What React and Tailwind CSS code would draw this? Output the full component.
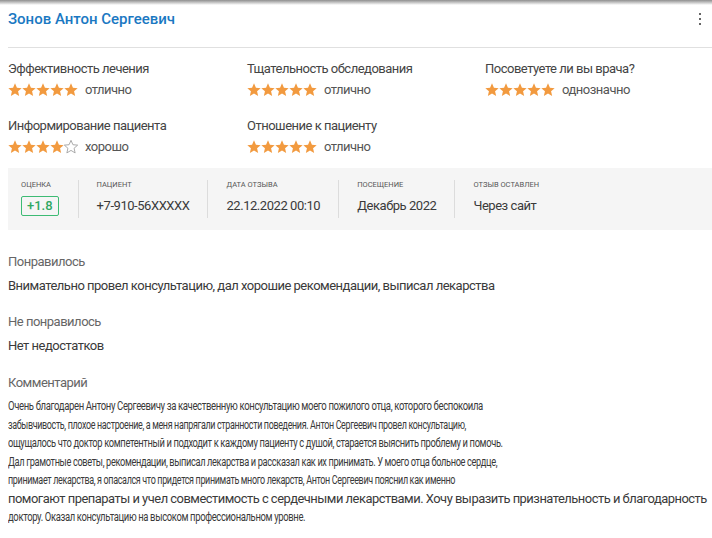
import React from 'react'

/* -------------------- STARS -------------------- */

function Star({filled}){

  return (
    <svg width="14" height="14" viewBox="1.5 2 21 21" className="shrink-0">
      <path
        d="M12 2.5l2.9 6.6 7.1.6-5.4 4.7 1.6 7-6.2-3.8-6.2 3.8 1.6-7L2 9.7l7.1-.6z"
        fill={filled ? '#f29a3f' : 'none'}
        stroke={filled ? '#f29a3f' : '#9e9e9e'}
        strokeWidth={filled ? 0 : 1.3}
        strokeLinejoin="round"
      />
    </svg>
  )

}

function Rating({label, value, text}){

  return (
    <div className="flex flex-col gap-[5px]">
      <span className="text-[13px] tracking-[-0.5px] text-[#444] leading-[16px]">{label}</span>
      <div className="flex items-center gap-[7px]">
        <div className="flex">
          {[1,2,3,4,5].map(i => <Star key={i} filled={i <= value}/>)}
        </div>
        <span className="text-[13px] tracking-[-0.5px] text-[#555] leading-[16px]">{text}</span>
      </div>
    </div>
  )

}

/* -------------------- INFO STRIP -------------------- */

function InfoCell({title, children, first}){

  return (
    <div className={first ? 'flex flex-col gap-[4px] pr-[19px]' : 'flex flex-col gap-[4px] px-[18px] border-l border-[#dcdcdc]'}>
      <span className="text-[7.5px] uppercase text-[#555] leading-[10px] h-[10px]">{title}</span>
      <div className="h-[24px] flex items-center text-[13px] tracking-[-0.45px] text-[#3a3a3a] whitespace-nowrap">{children}</div>
    </div>
  )

}

const ratings = [
  {label: 'Эффективность лечения', value: 5, text: 'отлично'},
  {label: 'Тщательность обследования', value: 5, text: 'отлично'},
  {label: 'Посоветуете ли вы врача?', value: 5, text: 'однозначно'},
  {label: 'Информирование пациента', value: 4, text: 'хорошо'},
  {label: 'Отношение к пациенту', value: 5, text: 'отлично'},
]

// comment lines, as they break in the card
const commentLines = [
  {fit: 'scale-x-[0.733]', text: 'Очень благодарен Антону Сергеевичу за качественную консультацию моего пожилого отца, которого беспокоила'},
  {fit: 'scale-x-[0.688]', text: 'забывчивость, плохое настроение, а меня напрягали странности поведения. Антон Сергеевич провел консультацию,'},
  {fit: 'scale-x-[0.72]', text: 'ощущалось что доктор компетентный и подходит к каждому пациенту с душой, старается выяснить проблему и помочь.'},
  {fit: 'scale-x-[0.711]', text: 'Дал грамотные советы, рекомендации, выписал лекарства и рассказал как их принимать. У моего отца больное сердце,'},
  {fit: 'scale-x-[0.691]', text: 'принимает лекарства, я опасался что придется принимать много лекарств, Антон Сергеевич пояснил как именно'},
  {fit: 'scale-x-[0.994]', text: 'помогают препараты и учел совместимость с сердечными лекарствами. Хочу выразить признательность и благодарность'},
  {fit: 'scale-x-[0.728]', text: 'доктору. Оказал консультацию на высоком профессиональном уровне.'},
]

/* ========================================================= */

export default function App(){

  return (

    <main className="w-[712px] h-[538px] overflow-hidden bg-white font-['Roboto',sans-serif]">

      <div className="h-[5px] bg-gradient-to-b from-[#8f8f8f] to-white"></div>

      {/* Header */}

      <div className="flex items-start justify-between pl-[8px] pr-[6px] pt-[4px] h-[42px]">
        <h1 className="text-[15px] font-medium text-[#1a78c2] leading-[20px]">
          Зонов Антон Сергеевич
        </h1>
        <div className="flex flex-col gap-[3px] mt-[4px] mr-[5px]">
          <span className="w-[2px] h-[2px] bg-[#666]"></span>
          <span className="w-[2px] h-[2px] bg-[#666]"></span>
          <span className="w-[2px] h-[2px] bg-[#666]"></span>
        </div>
      </div>

      <div className="ml-[8px] border-t border-[#e0e0e0]"></div>

      {/* Ratings */}

      <div className="grid grid-cols-[239px_238px_1fr] gap-y-[20px] pl-[8px] pt-[13px]">
        {ratings.map(r => (
          <Rating key={r.label} {...r}/>
        ))}
      </div>

      {/* Info strip */}

      <div className="ml-[8px] mt-[13px] h-[62px] bg-[#f5f5f5] flex items-center pl-[13px]">
        <InfoCell title="Оценка" first>
          <span className="px-[5px] h-[20px] flex items-center border border-[#3dbb74] rounded-[2px] text-[#2fa862] font-medium text-[13px] tracking-normal">+1.8</span>
        </InfoCell>
        <InfoCell title="Пациент">+7-910-56XXXXX</InfoCell>
        <InfoCell title="Дата отзыва">22.12.2022 00:10</InfoCell>
        <InfoCell title="Посещение">Декабрь 2022</InfoCell>
        <InfoCell title="Отзыв оставлен">Через сайт</InfoCell>
      </div>

      {/* Texts */}

      <div className="pl-[8px] pt-[24px] flex flex-col">

        <span className="text-[13px] tracking-[-0.5px] text-[#666] leading-[16px]">Понравилось</span>
        <p className="mt-[8px] text-[13px] tracking-[-0.5px] text-[#3a3a3a] leading-[16px]">
          Внимательно провел консультацию, дал хорошие рекомендации, выписал лекарства
        </p>

        <span className="mt-[20px] text-[13px] tracking-[-0.5px] text-[#666] leading-[16px]">Не понравилось</span>
        <p className="mt-[8px] text-[13px] tracking-[-0.5px] text-[#3a3a3a] leading-[16px]">Нет недостатков</p>

        <span className="mt-[21px] text-[13px] tracking-[-0.5px] text-[#666] leading-[16px]">Комментарий</span>
        <div className="mt-[6px] flex flex-col text-[13px] text-[#3a3a3a] leading-[18.5px]">
          {commentLines.map((l, i) => (
            <span key={i} className={'whitespace-nowrap tracking-[-0.5px] origin-left ' + l.fit}>
              {l.text}
            </span>
          ))}
        </div>

      </div>

    </main>

  )

}
